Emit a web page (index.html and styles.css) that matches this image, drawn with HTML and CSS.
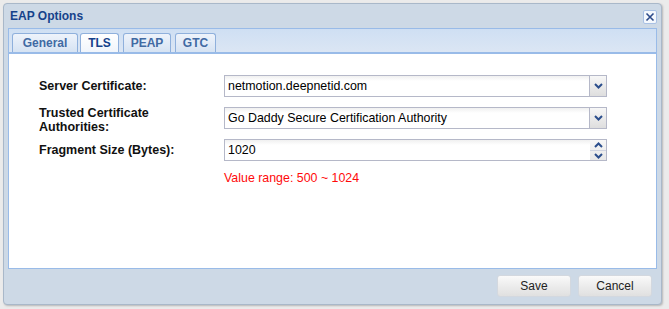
FILE: index.html
```html
<html>

<head>
    <link rel="stylesheet" href="styles.css">
</head>

<body>
    <div class="window">
        <div class="header">
            <span class="title">EAP Options</span>
            <span class="close">
                <svg width="10" height="10" viewBox="0 0 10 10"><path d="M1.5 1.5L8.5 8.5M8.5 1.5L1.5 8.5" stroke="#2d4a8a" stroke-width="1.6"/></svg>
            </span>
        </div>
        <div class="tabpanel">
            <div class="strip">
                <div class="tab tab-general">General</div>
                <div class="tab tab-tls active">TLS</div>
                <div class="tab tab-peap">PEAP</div>
                <div class="tab tab-gtc">GTC</div>
            </div>
            <div class="body">
                <div class="row">
                    <label>Server Certificate:</label>
                    <div class="field">
                        <span class="value">netmotion.deepnetid.com</span>
                        <span class="trigger">
                            <svg width="9" height="6" viewBox="0 0 9 6"><path d="M1 1L4.5 4.5L8 1" stroke="#2b4e8c" stroke-width="2" fill="none"/></svg>
                        </span>
                    </div>
                </div>
                <div class="row">
                    <label class="wrap">Trusted Certificate Authorities:</label>
                    <div class="field">
                        <span class="value">Go Daddy Secure Certification Authority</span>
                        <span class="trigger">
                            <svg width="9" height="6" viewBox="0 0 9 6"><path d="M1 1L4.5 4.5L8 1" stroke="#2b4e8c" stroke-width="2" fill="none"/></svg>
                        </span>
                    </div>
                </div>
                <div class="row">
                    <label>Fragment Size (Bytes):</label>
                    <div class="field">
                        <span class="value">1020</span>
                        <span class="spinner">
                            <span class="spin"><svg width="9" height="6" viewBox="0 0 9 6"><path d="M1 5L4.5 1.5L8 5" stroke="#2b4e8c" stroke-width="2" fill="none"/></svg></span>
                            <span class="spin"><svg width="9" height="6" viewBox="0 0 9 6"><path d="M1 1L4.5 4.5L8 1" stroke="#2b4e8c" stroke-width="2" fill="none"/></svg></span>
                        </span>
                    </div>
                </div>
                <div class="hint">Value range: 500 ~ 1024</div>
            </div>
        </div>
        <div class="footer">
            <button>Save</button>
            <button>Cancel</button>
        </div>
    </div>
</body>

</html>
```

FILE: styles.css
```css
body{
    margin: 0;
    padding: 3px;
    background: #ebebeb;
    font-family: "Liberation Sans", Arial, sans-serif;
    font-size: 12px;
}

.window{
    width: 649px;
    height: 296px;
    padding: 0 4px 4px 4px;
    background: #cdd9e6;
    border: 1px solid #a9b8c9;
    border-radius: 4px;
    box-shadow: 1px 1px 2px #b8b8b8;
    display: flex;
    flex-direction: column;
}

.header{
    height: 24px;
    display: flex;
    align-items: center;
    justify-content: space-between;
    padding-left: 2px;
}

.title{
    font-weight: bold;
    color: #15428b;
    font-size: 12px;
}

.close{
    width: 12px;
    height: 12px;
    margin-top: 1px;
    border: 1px solid #a9c1e4;
    border-radius: 2px;
    background: #f4f8fd;
    display: flex;
    align-items: center;
    justify-content: center;
}

.tabpanel{
    display: flex;
    flex-direction: column;
    height: 241px;
}

.strip{
    height: 20px;
    padding: 3px 0 0 3px;
    border: 1px solid #99bbe8;
    border-bottom: 2px solid #99bbe8;
    background: linear-gradient(#cfdff3, #dbe6f4);
    display: flex;
    align-items: flex-end;
    gap: 2px;
}

.tab{
    height: 18px;
    line-height: 19px;
    border: 1px solid #8fb0dc;
    border-bottom: none;
    border-radius: 3px 3px 0 0;
    background: linear-gradient(#eef3fb, #d6e3f3);
    color: #416aa3;
    font-weight: bold;
    text-align: center;
}

.tab-general{ width: 64px; }
.tab-tls{ width: 37px; }
.tab-peap{ width: 46px; margin-left: 2px; }
.tab-gtc{ width: 39px; margin-left: 2px; }

.tab.active{
    background: linear-gradient(#ffffff, #f0f5fb);
    color: #15428b;
}

.body{
    flex: 1;
    background: #ffffff;
    border: 1px solid #99bbe8;
    border-top: none;
    padding: 21px 0 0 30px;
}

.row{
    display: flex;
    align-items: center;
    height: 22px;
    margin-bottom: 10px;
}

.row label{
    width: 150px;
    margin-right: 35px;
    font-weight: bold;
    color: #111111;
    font-size: 12.5px;
    line-height: 14px;
}

.row label.wrap{
    padding-top: 4px;
}

.field{
    width: 381px;
    height: 20px;
    border: 1px solid #b5b8c8;
    background: linear-gradient(#f0f0f0, #ffffff 5px);
    display: flex;
    align-items: center;
    justify-content: space-between;
}

.value{
    padding-left: 3px;
    color: #000000;
    font-size: 12.4px;
}

.trigger{
    width: 16px;
    height: 20px;
    border-left: 1px solid #b5b8c8;
    background: linear-gradient(#f7f7f7, #dedede);
    display: flex;
    align-items: center;
    justify-content: center;
}

.spinner{
    width: 16px;
    height: 20px;
    display: flex;
    flex-direction: column;
    background: linear-gradient(#f7f7f7, #e8e8e8);
}

.spin{
    height: 10px;
    display: flex;
    align-items: center;
    justify-content: center;
}

.spin + .spin{
    border-top: 1px solid #d0d4e0;
    height: 9px;
}

.hint{
    margin-left: 185px;
    margin-top: 8px;
    color: #ff0a0a;
    font-size: 12.4px;
}

.footer{
    flex: 1;
    display: flex;
    justify-content: flex-end;
    align-items: flex-start;
    gap: 7px;
    padding: 6px 5px 0 0;
}

.footer button{
    width: 74px;
    height: 22px;
    border: 1px solid #d3d8df;
    border-radius: 3px;
    background: linear-gradient(#fafafa, #ececec 50%, #e0e0e0);
    font-family: "Liberation Sans", Arial, sans-serif;
    font-size: 12px;
    color: #222222;
}
```
